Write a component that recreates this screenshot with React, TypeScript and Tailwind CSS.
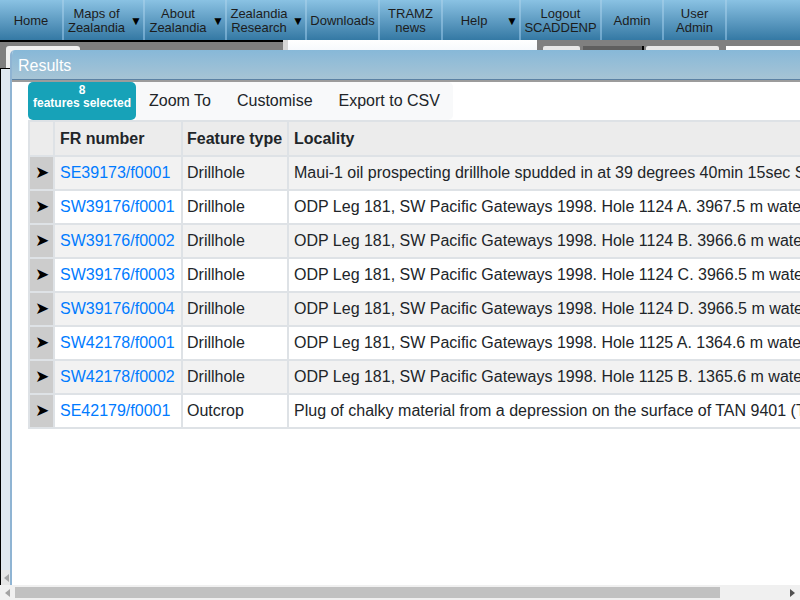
import React from 'react';

const navItems = [
    { label: ['Home'], w: 'w-[64px]', menu: false },
    { label: ['Maps of', 'Zealandia'], w: 'w-[81px]', menu: true },
    { label: ['About', 'Zealandia'], w: 'w-[82px]', menu: true },
    { label: ['Zealandia', 'Research'], w: 'w-[80px]', menu: true },
    { label: ['Downloads'], w: 'w-[73px]', menu: false },
    { label: ['TRAMZ', 'news'], w: 'w-[63px]', menu: false },
    { label: ['Help'], w: 'w-[78px]', menu: true },
    { label: ['Logout', 'SCADDENP'], w: 'w-[81px]', menu: false },
    { label: ['Admin'], w: 'w-[62px]', menu: false },
    { label: ['User', 'Admin'], w: 'w-[63px]', menu: false },
];

const rows = [
    ['SE39173/f0001', 'Drillhole', 'Maui-1 oil prospecting drillhole spudded in at 39 degrees 40min 15sec S, 173 degrees 20min 40sec E'],
    ['SW39176/f0001', 'Drillhole', 'ODP Leg 181, SW Pacific Gateways 1998. Hole 1124 A. 3967.5 m water depth.'],
    ['SW39176/f0002', 'Drillhole', 'ODP Leg 181, SW Pacific Gateways 1998. Hole 1124 B. 3966.6 m water depth.'],
    ['SW39176/f0003', 'Drillhole', 'ODP Leg 181, SW Pacific Gateways 1998. Hole 1124 C. 3966.5 m water depth.'],
    ['SW39176/f0004', 'Drillhole', 'ODP Leg 181, SW Pacific Gateways 1998. Hole 1124 D. 3966.5 m water depth.'],
    ['SW42178/f0001', 'Drillhole', 'ODP Leg 181, SW Pacific Gateways 1998. Hole 1125 A. 1364.6 m water depth.'],
    ['SW42178/f0002', 'Drillhole', 'ODP Leg 181, SW Pacific Gateways 1998. Hole 1125 B. 1365.6 m water depth.'],
    ['SE42179/f0001', 'Outcrop', 'Plug of chalky material from a depression on the surface of TAN 9401 (Trawl)'],
];

function NavBar() {
    return (
        <div className="flex h-[40px] bg-gradient-to-b from-[#8ac2e3] to-[#3479a4] text-[13px] leading-[14px] text-[#1c1c1c]">
            {navItems.map((item) => (
                <div key={item.label.join(' ')} className={`${item.w} flex h-full`}>
                    <div className="flex flex-1 items-center pt-[1px]">
                        <div className="flex-1 text-center">
                            {item.label.map((l) => (
                                <div key={l}>{l}</div>
                            ))}
                        </div>
                        {item.menu && <div className="w-[14px] text-center text-[12px] text-black">▼</div>}
                    </div>
                    <div className="w-[2px] h-full bg-gradient-to-b from-[#9dcbe7] to-[#6ba4ca]" />
                </div>
            ))}
        </div>
    );
}

function ResultsDialog() {
    return (
        <div className="absolute left-[10px] top-[50px] w-[900px] h-[535px] rounded-tl-[5px] overflow-hidden border-l-2 border-[#8fb4d3] bg-white">
            <div className="h-[30px] border-b border-[#5c82a4] bg-gradient-to-b from-[#87b8d8] to-[#a6c4d5] pl-[6px] pt-[2px] flex items-center text-white text-[16px]">
                Results
            </div>
            <div className="border-t-2 border-[#9c9c9c] pl-[16px]">
                <div className="flex h-[38px]">
                    <div className="w-[108px] rounded-[5px] bg-[#17a2b8] text-white font-bold text-[12px] leading-[13px] pt-[2px] flex flex-col items-center">
                        <div>8</div>
                        <div>features selected</div>
                    </div>
                    <div className="flex items-center rounded-r-[5px] bg-[#f8f9fa] text-[16px] text-[#212529]">
                        <div className="px-[13px]">Zoom To</div>
                        <div className="px-[13px]">Customise</div>
                        <div className="px-[13px]">Export to CSV</div>
                    </div>
                </div>
                <div className="grid grid-cols-[23px_126px_104px_1fr] gap-[2px] p-[2px] bg-[#dee2e6] text-[16px] text-[#212529] whitespace-nowrap">
                    <div className="h-[33px] bg-[#ececec]" />
                    <div className="h-[33px] bg-[#ececec] pl-[5px] flex items-center font-bold">FR number</div>
                    <div className="h-[33px] bg-[#ececec] pl-[4px] flex items-center font-bold">Feature type</div>
                    <div className="h-[33px] bg-[#ececec] pl-[5px] flex items-center font-bold">Locality</div>
                    {rows.map((r, i) => {
                        const bg = i % 2 === 0 ? 'bg-[#f2f2f2]' : 'bg-white';
                        return (
                            <React.Fragment key={r[0]}>
                                <div className="h-[32px] bg-[#cccccc] flex items-center justify-center text-black text-[17px]">➤</div>
                                <div className={`h-[32px] ${bg} pl-[5px] flex items-center text-[#007bff]`}>{r[0]}</div>
                                <div className={`h-[32px] ${bg} pl-[4px] flex items-center`}>{r[1]}</div>
                                <div className={`h-[32px] ${bg} pl-[5px] flex items-center overflow-hidden`}>{r[2]}</div>
                            </React.Fragment>
                        );
                    })}
                </div>
            </div>
        </div>
    );
}

export default function App() {
    return (
        <div className="relative w-[800px] h-[600px] overflow-hidden bg-white font-['Liberation_Sans',Arial,sans-serif]">
            <NavBar />
            <div className="flex h-[28px]">
                <div className="w-[283px] border-t-2 border-black bg-[#7f7f7f] pl-[6px] pt-[4px]">
                    <div className="w-[74px] h-[22px] rounded-t-[3px] bg-[#f0f0f0]" />
                </div>
                <div className="w-[5px] bg-[#d6d6d6]" />
                <div className="w-[249px] bg-gradient-to-b from-white to-[#e6eef8]" />
                <div className="w-[189px] bg-[#808080] pt-[6px] flex">
                    <div className="ml-[6px] w-[37px] rounded-t-[2px] bg-[#e8e8e8]" />
                    <div className="ml-[3px] w-[61px] bg-[#5f5f5f] border-r-2 border-black" />
                    <div className="ml-[2px] w-[73px] rounded-t-[2px] bg-[#e8e8e8]" />
                </div>
                <div className="flex-1 bg-[#808080] pt-[6px]">
                    <div className="h-full bg-white" />
                </div>
            </div>
            <div className="flex h-[517px]">
                <div className="w-[10px] border-l border-t border-black bg-[#dfe8f0] flex flex-col justify-end">
                    <div className="h-[15px] bg-[#e6e6e6] flex items-center justify-end pr-[1px]">
                        <svg width="5" height="8" viewBox="0 0 5 8">
                            <polygon points="5,0 0,4 5,8" fill="#a3a3a3" />
                        </svg>
                    </div>
                </div>
            </div>
            <div className="flex h-[15px] bg-[#f0f0f0]">
                <div className="w-[15px] flex items-center justify-center">
                    <svg width="5" height="8" viewBox="0 0 5 8">
                        <polygon points="5,0 0,4 5,8" fill="#a3a3a3" />
                    </svg>
                </div>
                <div className="w-[705px] h-[11px] mt-[2px] bg-[#c1c1c1]" />
                <div className="flex-1" />
                <div className="w-[15px] flex items-center justify-center">
                    <svg width="5" height="8" viewBox="0 0 5 8">
                        <polygon points="0,0 5,4 0,8" fill="#505050" />
                    </svg>
                </div>
            </div>
            <ResultsDialog />
        </div>
    );
}
